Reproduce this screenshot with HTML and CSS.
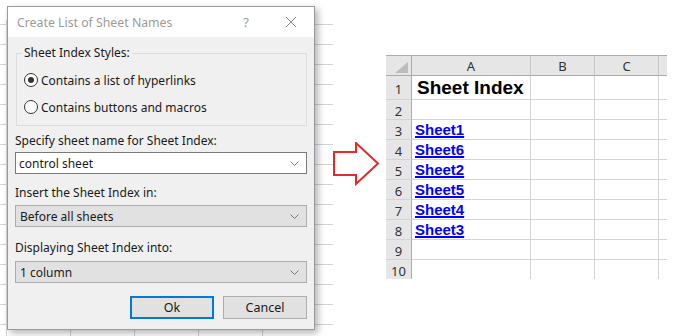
FILE: index.html
```html
<!DOCTYPE html>
<html lang="en">
<head>
    <meta charset="UTF-8">
    <title>Create List of Sheet Names</title>
    <link rel="stylesheet" href="styles.css">
</head>
<body>

    <!-- Excel background with the dialog on top -->
    <div class="backdrop">
        <div class="dialog">
            <div class="title-bar">
                <span class="title">Create List of Sheet Names</span>
                <span class="help">?</span>
                <svg class="close" width="12" height="12" viewBox="0 0 12 12">
                    <path d="M1 1 L11 11 M11 1 L1 11" stroke="#8a8a8a" stroke-width="1" fill="none"/>
                </svg>
            </div>

            <div class="dialog-body">
                <fieldset class="group">
                    <legend>Sheet Index Styles:</legend>
                    <div class="radio-row">
                        <span class="radio checked"></span>
                        <span>Contains a list of hyperlinks</span>
                    </div>
                    <div class="radio-row">
                        <span class="radio"></span>
                        <span>Contains buttons and macros</span>
                    </div>
                </fieldset>

                <div class="field-label label-1">Specify sheet name for Sheet Index:</div>
                <div class="combo combo-edit combo-1">
                    <span>control sheet</span>
                    <svg class="chevron" width="9" height="5" viewBox="0 0 9 5"><path d="M0.5 0.5 L4.5 4.5 L8.5 0.5" stroke="#777" fill="none"/></svg>
                </div>

                <div class="field-label label-2">Insert the Sheet Index in:</div>
                <div class="combo combo-2">
                    <span>Before all sheets</span>
                    <svg class="chevron" width="9" height="5" viewBox="0 0 9 5"><path d="M0.5 0.5 L4.5 4.5 L8.5 0.5" stroke="#777" fill="none"/></svg>
                </div>

                <div class="field-label label-3">Displaying Sheet Index into:</div>
                <div class="combo combo-3">
                    <span>1 column</span>
                    <svg class="chevron" width="9" height="5" viewBox="0 0 9 5"><path d="M0.5 0.5 L4.5 4.5 L8.5 0.5" stroke="#777" fill="none"/></svg>
                </div>

                <div class="buttons">
                    <button class="btn btn-default">Ok</button>
                    <button class="btn">Cancel</button>
                </div>
            </div>
        </div>
    </div>

    <!-- Arrow -->
    <div class="arrow-area">
        <svg width="48" height="44" viewBox="0 0 48 44">
            <polygon points="1,10 23,10 23,1 45,21.5 23,42 23,33 1,33" fill="#fff" stroke="#e42a2a" stroke-width="2"/>
        </svg>
    </div>

    <!-- Result sheet -->
    <div class="sheet-area">
        <div class="sheet">
            <div class="hd corner"><span class="corner-tri"></span></div>
            <div class="hd col-hd">A</div>
            <div class="hd col-hd">B</div>
            <div class="hd col-hd">C</div>
            <div class="hd col-hd last"></div>

            <div class="hd row-hd tall">1</div>
            <div class="cell tall title-cell">Sheet Index</div>
            <div class="cell tall"></div>
            <div class="cell tall"></div>
            <div class="cell tall last"></div>

            <div class="hd row-hd">2</div>
            <div class="cell"></div><div class="cell"></div><div class="cell"></div><div class="cell last"></div>

            <div class="hd row-hd">3</div>
            <div class="cell link-cell"><a href="#">Sheet1</a></div><div class="cell"></div><div class="cell"></div><div class="cell last"></div>

            <div class="hd row-hd">4</div>
            <div class="cell link-cell"><a href="#">Sheet6</a></div><div class="cell"></div><div class="cell"></div><div class="cell last"></div>

            <div class="hd row-hd">5</div>
            <div class="cell link-cell"><a href="#">Sheet2</a></div><div class="cell"></div><div class="cell"></div><div class="cell last"></div>

            <div class="hd row-hd">6</div>
            <div class="cell link-cell"><a href="#">Sheet5</a></div><div class="cell"></div><div class="cell"></div><div class="cell last"></div>

            <div class="hd row-hd">7</div>
            <div class="cell link-cell"><a href="#">Sheet4</a></div><div class="cell"></div><div class="cell"></div><div class="cell last"></div>

            <div class="hd row-hd">8</div>
            <div class="cell link-cell"><a href="#">Sheet3</a></div><div class="cell"></div><div class="cell"></div><div class="cell last"></div>

            <div class="hd row-hd">9</div>
            <div class="cell"></div><div class="cell"></div><div class="cell"></div><div class="cell last"></div>

            <div class="hd row-hd end">10</div>
            <div class="cell end"></div><div class="cell end"></div><div class="cell end"></div><div class="cell last end"></div>
        </div>
    </div>

</body>
</html>
```

FILE: styles.css
```css
body {
    margin: 0;
    padding: 0;
    width: 673px;
    height: 336px;
    overflow: hidden;
    display: flex;
    background-color: #fff;
    font-family: "Noto Sans", "Open Sans", sans-serif;
    font-size: 12px;
    color: #1a1a1a;
}

/* Excel sheet behind the dialog */
.backdrop {
    width: 333px;
    height: 336px;
    padding: 6px 0 0 7px;
    box-sizing: border-box;
    background:
        linear-gradient(#fff, #fff) top / 100% 20px no-repeat,
        repeating-linear-gradient(to right, transparent 0 6px, #d4d4d4 6px 7px, transparent 7px 64px) 0 0 / 300px 100% no-repeat,
        repeating-linear-gradient(to bottom, transparent 0 4px, #d4d4d4 4px 5px, transparent 5px 20px);
}

.dialog {
    width: 308px;
    height: 324px;
    box-sizing: border-box;
    border: 1px solid #9a9a9a;
    background-color: #f0f0f0;
    box-shadow: 3px 3px 7px rgba(0, 0, 0, 0.3);
}

.title-bar {
    height: 30px;
    background-color: #fff;
    display: flex;
    align-items: center;
    padding-left: 9px;
}

.title {
    color: #9b9b9b;
    font-size: 12.3px;
    flex: 1;
}

.help {
    color: #9b9b9b;
    font-size: 13px;
    margin-right: 36px;
}

.close {
    margin-right: 17px;
}

.dialog-body {
    padding: 7px 7px 0 7px;
}

/* Group box */
.group {
    margin: 0 0 0 1px;
    padding: 0 5px 9px 5px;
    border: 1px solid #dcdcdc;
    height: 82px;
    box-sizing: border-box;
}

.group legend {
    padding: 0 2px;
    line-height: 18px;
}

.radio-row {
    display: flex;
    align-items: center;
    height: 18px;
    margin-top: 9px;
    gap: 3px;
}

.radio {
    width: 12px;
    height: 12px;
    border: 1px solid #333;
    border-radius: 50%;
    background-color: #fff;
    position: relative;
    margin-left: 2px;
}

.radio.checked::after {
    content: "";
    position: absolute;
    left: 3px;
    top: 3px;
    width: 6px;
    height: 6px;
    border-radius: 50%;
    background-color: #333;
}

/* Labels and combo boxes */
.field-label {
    line-height: 18px;
}

.label-1 { margin-top: 6px; }
.label-2 { margin-top: 10px; }
.label-3 { margin-top: 12px; }

.combo {
    height: 22px;
    box-sizing: border-box;
    display: flex;
    align-items: center;
    justify-content: space-between;
    padding: 0 7px 0 4px;
    background-color: #e1e1e1;
    border: 1px solid #adadad;
}

.combo-edit {
    background-color: #fff;
    border-color: #7a7a7a;
    padding-left: 3px;
}

.combo-1 { margin-top: 2px; }
.combo-2 { margin-top: 3px; }
.combo-3 { margin-top: 4px; }

.buttons {
    display: flex;
    justify-content: flex-end;
    gap: 9px;
    margin-top: 13px;
}

.btn {
    width: 84px;
    height: 23px;
    box-sizing: border-box;
    background-color: #e1e1e1;
    border: 1px solid #adadad;
    font-family: inherit;
    font-size: 12.5px;
    color: #1a1a1a;
    padding: 0;
}

.btn-default {
    border: 2px solid #0078d7;
}

/* Arrow */
.arrow-area {
    width: 53px;
    padding-top: 142px;
}

/* Result sheet */
.sheet-area {
    padding-top: 55px;
}

.sheet {
    display: grid;
    grid-template-columns: 26px 119px 64px 64px 8px;
    grid-template-rows: 20px 24px repeat(8, 20px) 19px;
    border-top: 1px solid #ababab;
    font-family: "Noto Sans", sans-serif;
    font-size: 13px;
}

.hd {
    background-color: #e6e6e6;
    color: #333;
    display: flex;
    align-items: center;
    justify-content: center;
    box-sizing: border-box;
}

.col-hd {
    border-right: 1px solid #c6c6c6;
    border-bottom: 1px solid #ababab;
}

.corner {
    border-right: 1px solid #ababab;
    border-bottom: 1px solid #ababab;
    position: relative;
}

.corner-tri {
    position: absolute;
    right: 3px;
    bottom: 2px;
    width: 0;
    height: 0;
    border-left: 13px solid transparent;
    border-bottom: 11px solid #bcbcbc;
}

.row-hd {
    border-right: 1px solid #ababab;
    border-bottom: 1px solid #d4d4d4;
    padding-top: 3px;
}

.cell {
    border-right: 1px solid #d4d4d4;
    border-bottom: 1px solid #d4d4d4;
    box-sizing: border-box;
}

.last {
    border-right: none;
}

.end {
    border-bottom: none;
}

.title-cell {
    font-family: "Liberation Sans", Arial, sans-serif;
    font-weight: bold;
    font-size: 19px;
    line-height: 22px;
    padding: 1px 0 0 5px;
    color: #000;
}

.link-cell {
    font-family: "Liberation Sans", Arial, sans-serif;
    font-weight: bold;
    font-size: 15px;
    line-height: 18px;
    padding: 1px 0 0 3px;
}

.link-cell a {
    color: #0000ff;
    text-decoration: underline;
    text-decoration-thickness: 2px;
    text-underline-offset: 1px;
}
```
